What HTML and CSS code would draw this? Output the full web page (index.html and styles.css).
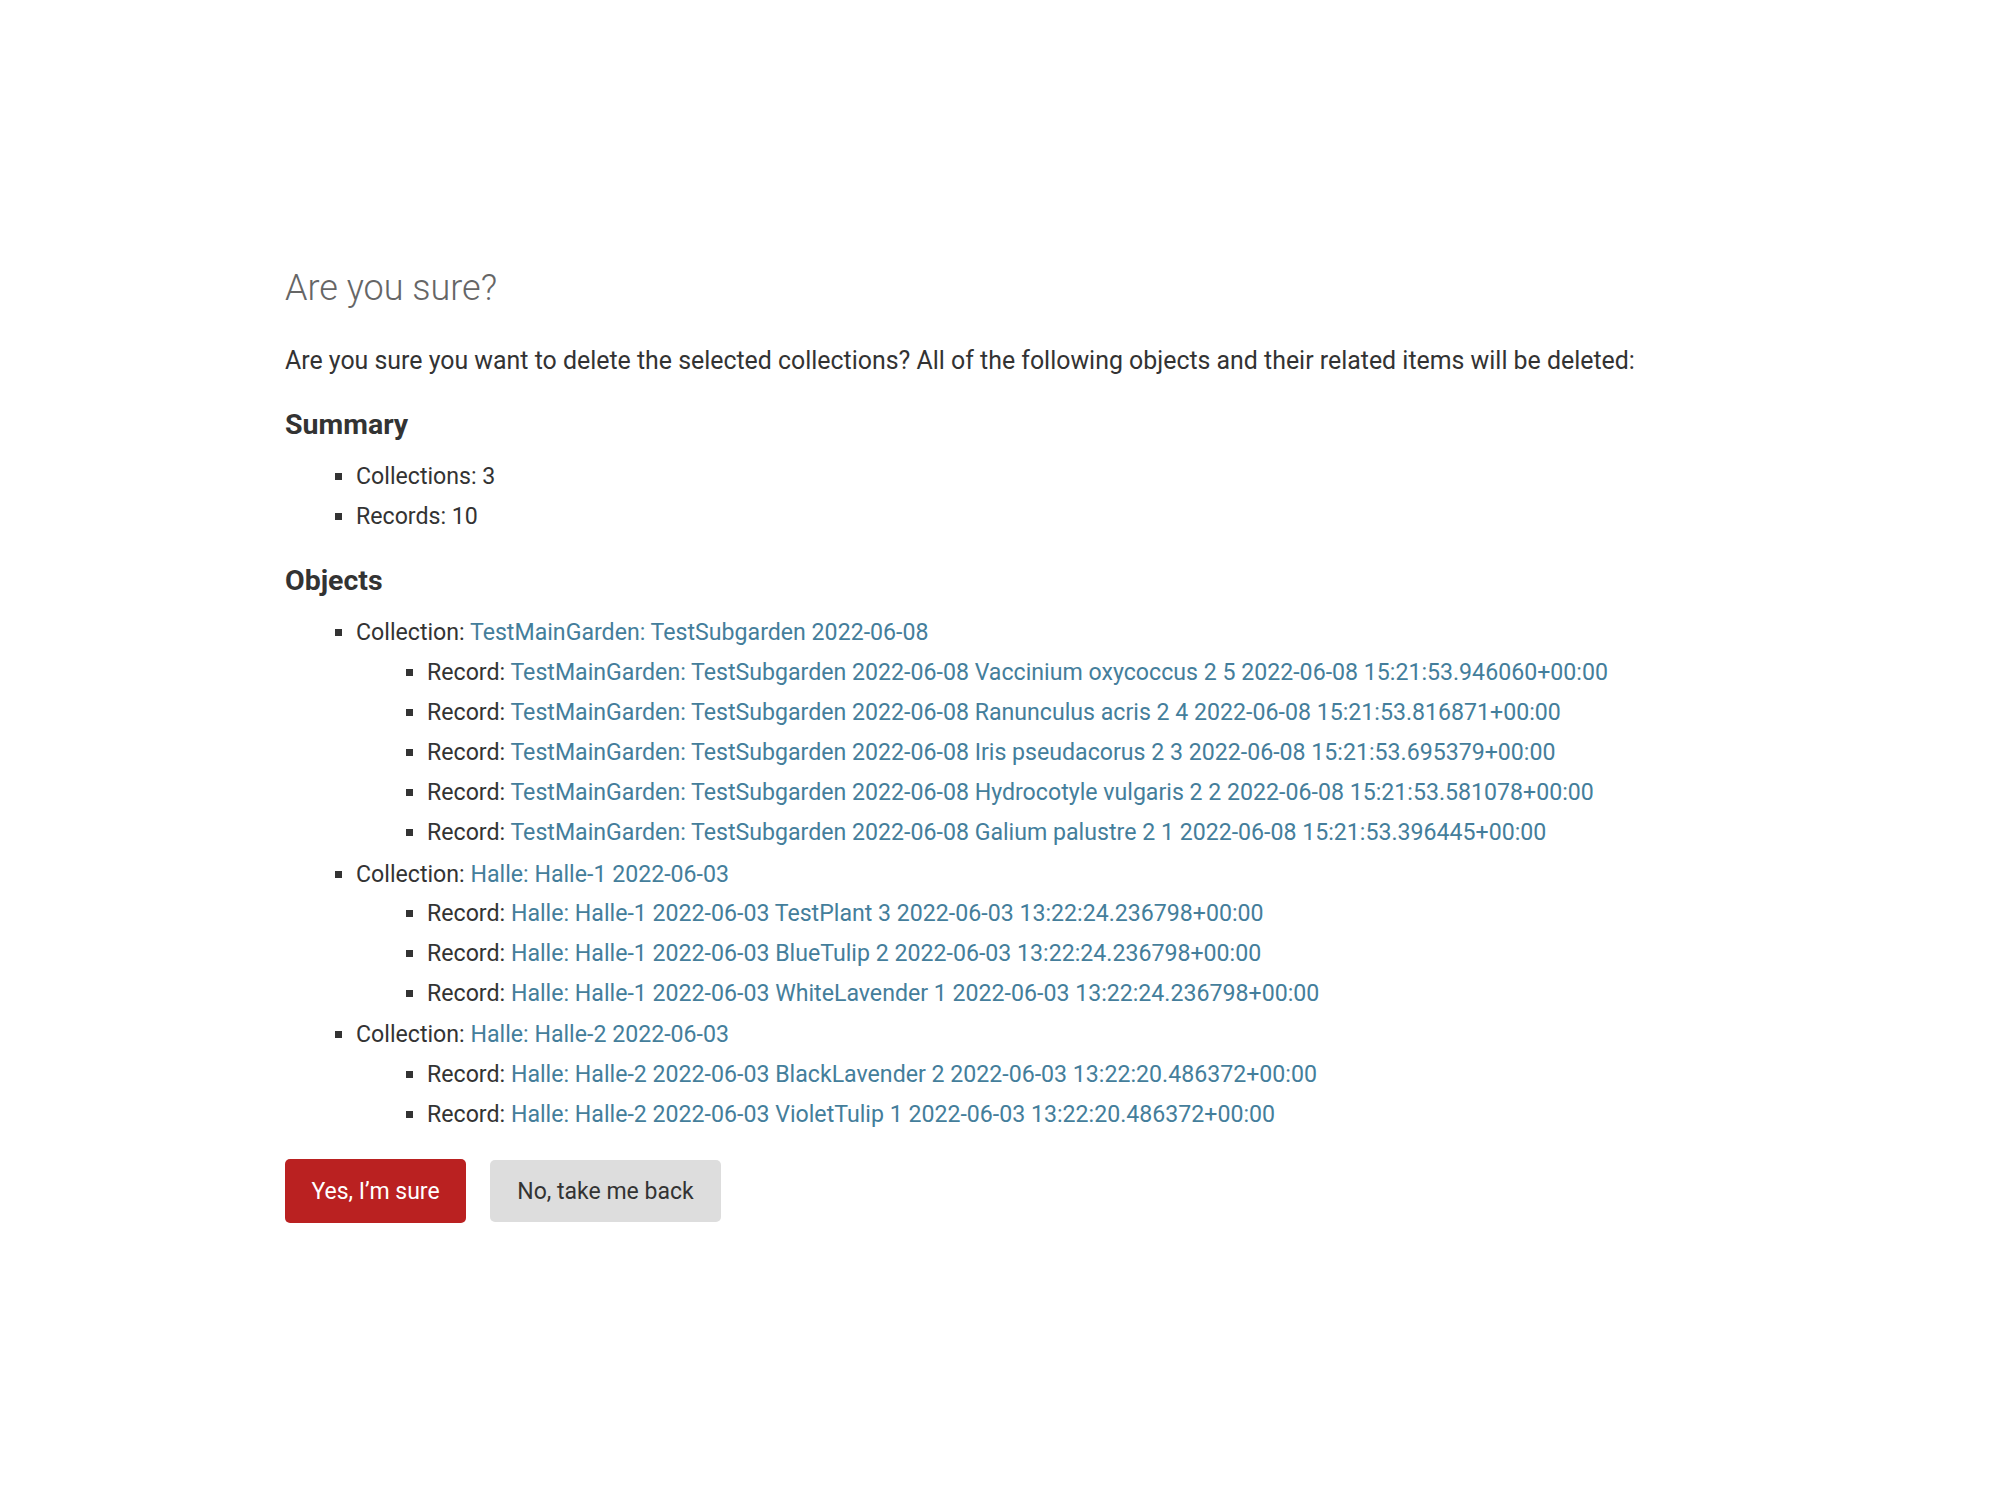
FILE: index.html
```html
<!DOCTYPE html>
<html lang="en">
<head>
<meta charset="utf-8">
<title>Are you sure?</title>
<link rel="stylesheet" href="styles.css">
</head>
<body>
<div class="content">
  <h1 class="title">Are you sure?</h1>
  <p class="intro">Are you sure you want to delete the selected collections? All of the following objects and their related items will be deleted:</p>
  <h2 class="section">Summary</h2>
  <ul class="list summary">
    <li>Collections: 3</li>
    <li>Records: 10</li>
  </ul>
  <h2 class="section">Objects</h2>
  <ul class="list objects">
    <li>Collection: <a href="#">TestMainGarden: TestSubgarden 2022-06-08</a>
      <ul class="list sub">
        <li>Record: <a href="#">TestMainGarden: TestSubgarden 2022-06-08 Vaccinium oxycoccus 2 5 2022-06-08 15:21:53.946060+00:00</a></li>
        <li>Record: <a href="#">TestMainGarden: TestSubgarden 2022-06-08 Ranunculus acris 2 4 2022-06-08 15:21:53.816871+00:00</a></li>
        <li>Record: <a href="#">TestMainGarden: TestSubgarden 2022-06-08 Iris pseudacorus 2 3 2022-06-08 15:21:53.695379+00:00</a></li>
        <li>Record: <a href="#">TestMainGarden: TestSubgarden 2022-06-08 Hydrocotyle vulgaris 2 2 2022-06-08 15:21:53.581078+00:00</a></li>
        <li>Record: <a href="#">TestMainGarden: TestSubgarden 2022-06-08 Galium palustre 2 1 2022-06-08 15:21:53.396445+00:00</a></li>
      </ul>
    </li>
    <li>Collection: <a href="#">Halle: Halle-1 2022-06-03</a>
      <ul class="list sub">
        <li>Record: <a href="#">Halle: Halle-1 2022-06-03 TestPlant 3 2022-06-03 13:22:24.236798+00:00</a></li>
        <li>Record: <a href="#">Halle: Halle-1 2022-06-03 BlueTulip 2 2022-06-03 13:22:24.236798+00:00</a></li>
        <li>Record: <a href="#">Halle: Halle-1 2022-06-03 WhiteLavender 1 2022-06-03 13:22:24.236798+00:00</a></li>
      </ul>
    </li>
    <li>Collection: <a href="#">Halle: Halle-2 2022-06-03</a>
      <ul class="list sub">
        <li>Record: <a href="#">Halle: Halle-2 2022-06-03 BlackLavender 2 2022-06-03 13:22:20.486372+00:00</a></li>
        <li>Record: <a href="#">Halle: Halle-2 2022-06-03 VioletTulip 1 2022-06-03 13:22:20.486372+00:00</a></li>
      </ul>
    </li>
  </ul>
  <form class="actions">
    <button type="button" class="btn btn-danger">Yes, I’m sure</button>
    <a href="#" class="btn btn-cancel">No, take me back</a>
  </form>
</div>
</body>
</html>
```
FILE: styles.css
```css
html, body {
  margin: 0;
  padding: 0;
  background: #ffffff;
}
body {
  font-family: Roboto, "Liberation Sans", sans-serif;
  color: #333333;
  font-size: 23px;
}
.content {
  padding: 268px 0 0 285px;
}
.title {
  margin: 0;
  font-size: 36px;
  line-height: 41px;
  font-weight: 300;
  color: #666666;
}
.intro {
  margin: 36px 0 0 0;
  font-size: 24.9px;
  line-height: 32px;
}
.section {
  margin: 32px 0 0 0;
  font-size: 28.5px;
  line-height: 32px;
  font-weight: 700;
  color: #333333;
}
.summary + .section {
  margin-top: 28px;
}
.list {
  margin: 16px 0 0 0;
  padding-left: 71px;
  font-size: 23.15px;
}
.list li {
  list-style-type: square;
  padding: 1px 0;
  line-height: 38.2px;
}
.list .sub {
  margin: 0;
}
a {
  color: #447e9b;
  text-decoration: none;
}
.actions {
  display: flex;
  align-items: flex-start;
  gap: 24px;
  margin-top: 23px;
}
.btn {
  font-family: Roboto, "Liberation Sans", sans-serif;
  font-size: 23px;
  border: none;
  border-radius: 5px;
  box-sizing: border-box;
  display: flex;
  align-items: center;
  justify-content: center;
  cursor: pointer;
}
.btn-danger {
  background: #ba2121;
  color: #ffffff;
  width: 181px;
  height: 64px;
}
.btn-cancel {
  background: #dddddd;
  color: #333333;
  width: 231px;
  height: 62px;
  margin-top: 1px;
}
```
